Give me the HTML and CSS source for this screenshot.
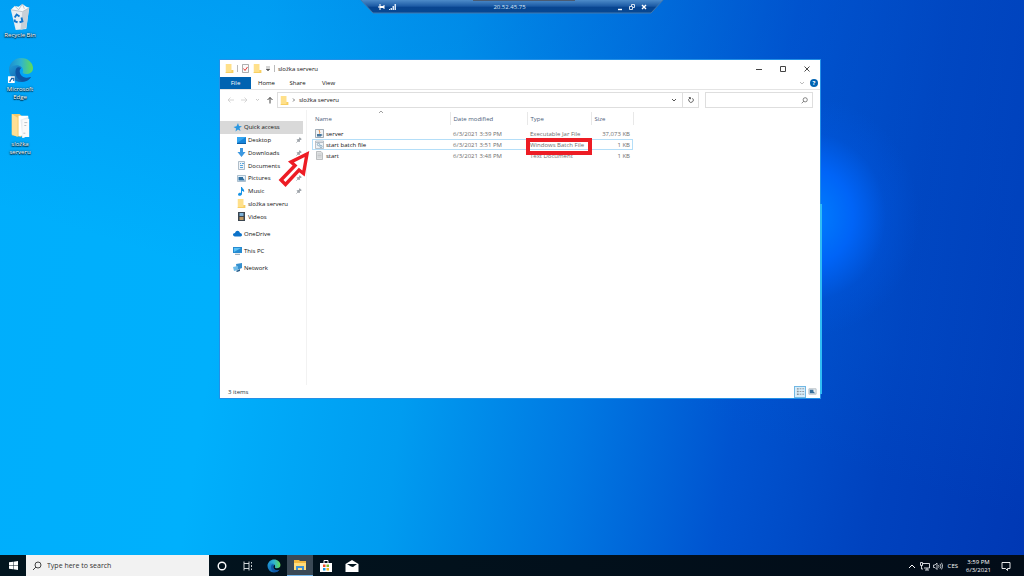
FILE: index.html
```html
<!DOCTYPE html>
<html lang="en">
<head>
<meta charset="utf-8">
<title>Desktop</title>
<link rel="stylesheet" href="styles.css">
</head>
<body>
<svg class="defs" aria-hidden="true">
  <defs>
    <linearGradient id="edgeBlue" x1="0" y1="0" x2="1" y2="1"><stop offset="0" stop-color="#1f9bd7"/><stop offset="1" stop-color="#0c4fa0"/></linearGradient>
    <linearGradient id="edgeGreen" x1="0" y1="0" x2="1" y2="0"><stop offset="0" stop-color="#1c8fd0"/><stop offset=".5" stop-color="#2fb4cf"/><stop offset="1" stop-color="#62dc55"/></linearGradient>
    <symbol id="edge" viewBox="0 0 26 26">
      <path fill="url(#edgeBlue)" d="M1 12C1 19 6 25 13 25c5 0 8-2 10-5-4 2-9 1-11-3-1-3 0-5 2-7-4-4-12-3-13 2z"/>
      <path fill="#0d56a5" d="M8 12c-2 6 2 12 8 12 3 0 6-2 7-4-5 2-10 0-11-4-1-2 0-4 1-5-2-1-4-1-5 1z"/>
      <path fill="url(#edgeGreen)" d="M1 12C2 5 7 1 13 1c7 0 12 5 12 10 0 4-3 6-7 6-3 0-4-1-3-3 1-5-8-9-14-2z"/>
    </symbol>
    <symbol id="folder" viewBox="0 0 8 9"><path fill="#ffe08a" d="M0 0h6v6h2v3H0z"/><path fill="#f8cf62" d="M6 6h2v3H0V8h6z"/></symbol>
    <symbol id="pin" viewBox="0 0 6 6"><path d="M3.500 .3 5.700 2.500M4 1 2.200 2.800 1 2.700l2.300 2.300-.1-1.200L5 2M2.100 3.900.4 5.600" fill="#a4a9ae" stroke="#8b9299" stroke-width=".7"/></symbol>
    <symbol id="search" viewBox="0 0 10 10"><circle cx="6" cy="4" r="3" fill="none" stroke="currentColor"/><path d="M4 6 1 9" stroke="currentColor" fill="none"/></symbol>
  </defs>
</svg>

<main class="desktop">
  <nav class="shortcuts" aria-label="Desktop icons">
    <a class="shortcut shortcut-bin" href="#bin">
      <svg class="shortcut-icon" viewBox="0 0 28 28"><path fill="#e9eef2" d="m4 7 19-2-3 22-11 1z"/><path fill="#c8d0d7" d="m16 7 7-2-3 21-6 2z"/><path fill="#f8fafb" d="m4 7 4-4 4 1 4-3 4 3 3 1-7 4z"/><path stroke="#aeb8c0" fill="none" stroke-width=".8" d="m4 7 12 2 7-4M8 3l4 4 4-6 2 5"/><path fill="none" stroke="#1476cc" stroke-width="2" d="m8 15 2-3 3 2M15 15l1 4-3 1M11 20l-3-1v-2"/></svg>
      <span>Recycle Bin</span>
    </a>
    <a class="shortcut" href="#edge-app">
      <svg class="shortcut-icon" viewBox="0 0 28 28"><use href="#edge" x="1" y="0" width="27" height="27"/><path fill="#fff" d="M1 20h7v7H1z"/><path fill="none" stroke="#1664ad" stroke-width="1.200" d="M3 26c0-2 1-3 3-4M4 22h3v3"/></svg>
      <span>Microsoft Edge</span>
    </a>
    <a class="shortcut" href="#folder">
      <svg class="shortcut-icon" viewBox="0 0 28 28"><path fill="#f4ca69" d="M5 2h8l2 2v22l-10-2z"/><path fill="#fff" d="M12 4h10v20l-10 1z"/><path fill="#e8edf0" d="m14 8 8-3v20l-6 2z"/><path fill="#fafafa" d="m16 8 7-1v19h-4l-3 1z"/><path fill="#ffdf94" d="m5 2 6 4v20l-6-3z"/><path stroke="#b7bec4" fill="none" d="M18 11h3M18 14h2M17 22h2"/></svg>
      <span>složka serveru</span>
    </a>
  </nav>

  <header class="remote">
    <svg class="remote-shape" viewBox="0 0 306 14" preserveAspectRatio="none" aria-hidden="true">
      <defs><linearGradient id="rb" x1="0" y1="0" x2="0" y2="1"><stop offset="0" stop-color="#5593cf"/><stop offset=".5" stop-color="#1d5ca6"/><stop offset=".6" stop-color="#084590"/><stop offset="1" stop-color="#064791"/></linearGradient></defs>
      <path fill="url(#rb)" stroke="#4479ac" d="M1 -1 14 13H292L305 -1z"/><path fill="#4a5b72" d="M114 0h102v1H114z"/>
    </svg>
    <div class="remote-content">
      <button class="remote-button" aria-label="Pin"><svg viewBox="0 0 8 8"><path d="M3 1v6M3 4h4M7 2v4M1 4h2M3 3.500h4M3 4.500h4" stroke="#fff"/></svg></button>
      <svg class="signal" viewBox="0 0 8 8"><path fill="#dceaf8" d="M0 6h1v1H0zM1.500 5H3v2H1.500zM3.500 3H5v4H3.500zM5.500 1H7v6H5.500z"/></svg>
      <span class="remote-name">20.52.45.75</span>
      <button class="remote-button" aria-label="Minimize session"><svg viewBox="0 0 8 8"><path d="M2 6.500h4" stroke="#fff" stroke-width="1.400"/></svg></button>
      <button class="remote-button" aria-label="Restore session"><svg viewBox="0 0 8 8"><path d="M3.500 3V1.500h3v3H5M1.500 3.500h3v3h-3z" fill="none" stroke="#e4effa" stroke-width=".9"/></svg></button>
      <button class="remote-button" aria-label="Close session"><svg viewBox="0 0 8 8"><path d="m2 2 4 4m0-4L2 6" stroke="#fff" stroke-width="1.400"/></svg></button>
    </div>
  </header>

  <section class="window" aria-label="složka serveru">
    <header class="titlebar">
      <svg class="icon" viewBox="0 0 8 9"><use href="#folder"/></svg>
      <i class="bar"></i>
      <svg class="icon" viewBox="0 0 8 9"><path fill="#fafafa" stroke="#8c8c8c" stroke-width=".7" d="M1 .5h6v8H1z"/><path d="m2 4.500 1.500 2L6 3" stroke="#e33b37" fill="none"/></svg>
      <svg class="icon" viewBox="0 0 8 9"><use href="#folder"/></svg>
      <svg class="caret" viewBox="0 0 6 6"><path d="M1 1h4M1 3h4L3 5z" fill="#555" stroke="#555" stroke-width=".5"/></svg>
      <i class="bar"></i>
      <h1 class="title">složka serveru</h1>
      <button class="caption" aria-label="Minimize"><svg viewBox="0 0 8 8"><path d="M1 4.500h6" stroke="#444"/></svg></button>
      <button class="caption" aria-label="Maximize"><svg viewBox="0 0 8 8"><path d="M1.500 1.500h5v5h-5z" fill="none" stroke="#444"/></svg></button>
      <button class="caption" aria-label="Close"><svg viewBox="0 0 8 8"><path d="m1.500 1.500 5 5m0-5-5 5" stroke="#333" stroke-width=".9"/></svg></button>
    </header>
    <div class="tabs">
      <button class="tab tab-file">File</button><button class="tab">Home</button><button class="tab">Share</button><button class="tab">View</button>
      <span class="grow"></span>
      <button class="plain" aria-label="Expand ribbon"><svg viewBox="0 0 8 8"><path d="m2 3 2 2 2-2" fill="none" stroke="#aaa" stroke-width=".8"/></svg></button>
      <button class="help" aria-label="Help">?</button>
    </div>
    <div class="address-row">
      <div class="history">
        <button class="plain" aria-label="Back"><svg viewBox="0 0 8 8"><path d="M7 4H1m2.500-2.500L1 4l2.500 2.500" fill="none" stroke="#ccc" stroke-width=".8"/></svg></button>
        <button class="plain" aria-label="Forward"><svg viewBox="0 0 8 8"><path d="M1 4h6M4.500 1.500 7 4 4.500 6.500" fill="none" stroke="#ccc" stroke-width=".8"/></svg></button>
        <button class="plain" aria-label="Recent"><svg viewBox="0 0 8 8"><path d="m3 3 1.500 1.500L6 3" fill="none" stroke="#bbb" stroke-width=".8"/></svg></button>
        <button class="plain" aria-label="Up"><svg viewBox="0 0 8 8"><path d="M4 7.500V1.500M1.500 4 4 1.500 6.500 4" fill="none" stroke="#444"/></svg></button>
      </div>
      <div class="address">
        <svg class="icon" viewBox="0 0 8 9"><use href="#folder"/></svg>
        <svg class="caret" viewBox="0 0 6 6"><path d="m2 1.500 1.500 1.500L2 4.500" fill="none" stroke="#555" stroke-width=".8"/></svg>
        <span class="path">složka serveru</span>
        <button class="plain" aria-label="Previous locations"><svg viewBox="0 0 8 8"><path d="m2 3 2 2 2-2" fill="none" stroke="#555"/></svg></button>
        <button class="plain refresh" aria-label="Refresh"><svg viewBox="0 0 8 8"><path d="M5.500 2.300A2.300 2.300 0 1 1 3 2M1.800 1.500H3.500V3.200" fill="none" stroke="#555" stroke-width=".9"/></svg></button>
      </div>
      <div class="find"><input class="find-input" type="text" aria-label="Search folder"><svg class="find-icon" viewBox="0 0 10 10"><use href="#search"/></svg></div>
    </div>

    <div class="content">
      <nav class="sidebar" aria-label="Locations">
        <div class="quick">
          <a class="place place-active" href="#quick"><svg class="icon" viewBox="0 0 9 9"><path fill="#2a97e0" d="m5 0 1 3 3 .2-2.500 1.800L7.500 8 5 6.500 2.500 8.500l.6-3L.5 4l3-.7z"/></svg>Quick access</a>
          <a class="place place-child" href="#desktop"><svg class="icon" viewBox="0 0 9 9"><path fill="#1583d8" d="M0 1h9v7H0z"/><path fill="#35a6f0" d="M0 1h9L0 7z"/><path fill="#0b5fa8" d="M0 7h9v1H0z"/></svg><span class="place-name">Desktop</span><svg class="pin" viewBox="0 0 6 6"><use href="#pin"/></svg></a>
          <a class="place place-child" href="#downloads"><svg class="icon" viewBox="0 0 9 9"><path fill="#3d98e0" d="M3 0h3v4h2.500L4.500 9 .5 4H3z"/></svg><span class="place-name">Downloads</span><svg class="pin" viewBox="0 0 6 6"><use href="#pin"/></svg></a>
          <a class="place place-child" href="#documents"><svg class="icon" viewBox="0 0 9 9"><path fill="#eef3f7" stroke="#8fa3b3" stroke-width=".7" d="M1.500.5h6v8h-6z"/><path stroke="#4a9cd8" d="M3 2.500h1M5 2.500h2M3 4.500h3M3 6.500h3" stroke-width=".9"/></svg><span class="place-name">Documents</span><svg class="pin" viewBox="0 0 6 6"><use href="#pin"/></svg></a>
          <a class="place place-child" href="#pictures"><svg class="icon" viewBox="0 0 9 9"><path fill="#e8f2fa" stroke="#8da7ba" stroke-width=".7" d="M.5 1.500h8v6h-8z"/><path fill="#2e6e9f" d="M1.500 3H6v1l2 2.500H1.500z"/></svg><span class="place-name">Pictures</span><svg class="pin" viewBox="0 0 6 6"><use href="#pin"/></svg></a>
          <a class="place place-child" href="#music"><svg class="icon" viewBox="0 0 9 9"><path fill="#1793e5" d="M4 0h1c0 2 3 2 2 5-1-1-1-1-2-1v3C5 9 1 9.500 1 7.500 1 6 3 5.500 4 6z"/></svg><span class="place-name">Music</span><svg class="pin" viewBox="0 0 6 6"><use href="#pin"/></svg></a>
          <a class="place place-child" href="#slozka"><svg class="icon" viewBox="0 0 8 9"><use href="#folder"/></svg><span class="place-name">složka serveru</span></a>
          <a class="place place-child" href="#videos"><svg class="icon" viewBox="0 0 9 9"><path fill="#3c4650" d="M1 0h7v9H1z"/><path fill="#7eb2d9" d="M2.500 1h4v3h-4z"/><path fill="#bf9a64" d="M2.500 5h4v3h-4z"/></svg><span class="place-name">Videos</span></a>
        </div>
        <a class="place place-root" href="#onedrive"><svg class="icon" viewBox="0 0 9 9"><path fill="#0c72c9" d="M2 7.500C-1 7-.3 4 2 4c1-3 4-3 5 0 2 0 3 3 .5 3.500z"/></svg>OneDrive</a>
        <a class="place place-root" href="#pc"><svg class="icon" viewBox="0 0 9 9"><path fill="#268bd1" d="M0 1h9v6H0z"/><path fill="#5dc2f4" d="M1 2h7L1 6z"/><path stroke="#6f8799" d="M2 8.300h5" stroke-width=".8"/></svg>This PC</a>
        <a class="place place-root" href="#network"><svg class="icon" viewBox="0 0 9 9"><path fill="#3590cf" d="m3 1 6-1v5L4 7z"/><path fill="#6fbce9" d="m0 4 5-1v4L1 8z"/><path fill="#285f8c" d="m3 8 4-2v2L4 9z"/></svg>Network</a>
      </nav>
      <div class="files">
        <table class="list">
          <colgroup><col class="col-name"><col class="col-date"><col class="col-type"><col class="col-size"></colgroup>
          <thead><tr><th class="sorted">Name<svg class="sort" viewBox="0 0 6 4"><path d="m1 3 2-2 2 2" fill="none" stroke="#777" stroke-width=".7"/></svg></th><th>Date modified</th><th>Type</th><th>Size</th></tr></thead>
          <tbody>
            <tr><td><div class="file"><svg class="icon" viewBox="0 0 9 9"><path fill="#f0f2f4" stroke="#7d8c99" stroke-width=".7" d="M.5.5h8v8h-8z"/><path fill="#47779e" d="M2 5h4v2.500H2z"/><path stroke="#e37824" fill="none" d="M4.500 1c-1 1 1 2 0 3.500"/><path fill="none" stroke="#47779e" stroke-width=".7" d="M6 5.500h1v1H6"/></svg>server</div></td><td>6/3/2021 3:39 PM</td><td>Executable Jar File</td><td class="num">37,073 KB</td></tr>
            <tr class="focused"><td><div class="file"><svg class="icon" viewBox="0 0 9 9"><path fill="#eef2f5" stroke="#a1abb3" stroke-width=".7" d="M.5 1h8v7.500h-8z"/><path stroke="#a1abb3" stroke-width=".7" d="M1 2.500h7"/><circle cx="3.500" cy="4.500" r="1.200" fill="none" stroke="#7aa0b9" stroke-width=".8"/><circle cx="6" cy="6.500" r="1.100" fill="none" stroke="#7aa0b9" stroke-width=".8"/></svg>start batch file</div></td><td>6/3/2021 3:51 PM</td><td>Windows Batch File</td><td class="num">1 KB</td></tr>
            <tr><td><div class="file"><svg class="icon" viewBox="0 0 9 9"><path fill="#e1e3e4" stroke="#a5a9ac" stroke-width=".7" d="M1.500.5h4.500l1.500 1.500v6.500h-6z"/><path stroke="#b1b5b8" stroke-width=".6" d="M2.500 3h4M2.500 4.500h4M2.500 6h4"/></svg>start</div></td><td>6/3/2021 3:48 PM</td><td>Text Document</td><td class="num">1 KB</td></tr>
          </tbody>
        </table>
      </div>
    </div>
    <footer class="status"><span class="grow">3 items</span>
      <button class="view view-on" aria-label="Details"><svg viewBox="0 0 10 10"><path d="M1 2h2M1 5h2M1 8h2" stroke="#8a9298" stroke-width="1.500"/><path d="M4 2h2M7 2h2M4 5h2M7 5h2M4 8h2M7 8h2" stroke="#8a9298"/></svg></button>
      <button class="view" aria-label="Large icons"><svg viewBox="0 0 10 10"><path d="M1 2h8v6H1z" fill="#e9eef2" stroke="#b4bdc4"/><path fill="#356e9b" d="M2 3h4v2l2 2H2z"/></svg></button>
    </footer>
    <svg class="pointer" viewBox="0 0 36 40" aria-hidden="true"><path fill="#fff" stroke="#ed1c24" stroke-width="3.400" d="M31 5 15 13l4 3.500L5 31l4.500 4.500L23 21l4.500 3.500z"/></svg>
    <i class="marker"></i>
  </section>
</main>

<footer class="taskbar">
  <button class="task start" aria-label="Start"><svg viewBox="0 0 10 10"><path fill="#fff" d="m0 1.500 4.500-.7v4H0zM5 .7 10 0v4.800H5zM0 5.300h4.500v4L0 8.600zM5 5.300h5V10l-5-.7z"/></svg></button>
  <label class="search"><svg class="search-icon" viewBox="0 0 10 10"><use href="#search"/></svg><input class="search-input" type="text" placeholder="Type here to search" aria-label="Type here to search"></label>
  <button class="task" aria-label="Cortana"><svg viewBox="0 0 14 14"><circle cx="7" cy="7" r="3.800" fill="none" stroke="#fff" stroke-width="1.400"/></svg></button>
  <button class="task" aria-label="Task view"><svg viewBox="0 0 14 14"><path d="M3 2.500v2h5v-2M3 11.500v-2h5v2M3 4.500v5M8 4.500v5M10.500 3v1.500M10.500 6v2M10.500 9.500V11" fill="none" stroke="#e3e8ea" stroke-width=".9"/></svg></button>
  <button class="task" aria-label="Microsoft Edge"><svg viewBox="0 0 26 26"><use href="#edge"/></svg></button>
  <button class="task task-on" aria-label="File Explorer"><svg viewBox="0 0 14 14"><path fill="#f3b83f" d="M1 2h5l1 1h6v9H1z"/><path fill="#ffdc7b" d="M1 5h12v7H1z"/><path fill="#3e91d4" d="M3 8h8v4H9v-2H5v2H3z"/></svg></button>
  <button class="task" aria-label="Store"><svg viewBox="0 0 14 14"><path d="M5 4V1.500h4V4" fill="none" stroke="#fff"/><path fill="#fff" d="M1 4h12v9H1z"/><path fill="#ef4b27" d="M4 5.500h2.500V8H4z"/><path fill="#7aba2d" d="M7.500 5.500H10V8H7.500z"/><path fill="#159bdc" d="M4 9h2.500v2.500H4z"/><path fill="#f5b51b" d="M7.500 9H10v2.500H7.500z"/></svg></button>
  <button class="task" aria-label="Mail"><svg viewBox="0 0 14 14"><path fill="#fff" d="m.5 5 6.500-4 6.500 4v8H.5z"/><path fill="#02151f" d="M2 5h10L8 8 6 7.500z"/></svg></button>
  <span class="grow"></span>
  <div class="tray">
    <button class="tray-button" aria-label="Hidden icons"><svg viewBox="0 0 10 10"><path d="m2 7 3-3 3 3" fill="none" stroke="#fff"/></svg></button>
    <button class="tray-button" aria-label="Network"><svg viewBox="0 0 10 10"><path d="M3 2.500h6.500v4.500H4M5 9h4M7 7v2M.5 1.500h2v3h-2zM1.500 4.500V8H3" fill="none" stroke="#e6eaef" stroke-width=".9"/></svg></button>
    <button class="tray-button" aria-label="Volume"><svg viewBox="0 0 10 10"><path d="M.5 4v2.500H2L4 8.500V2L2 4zM5.500 4q1 1.300 0 2.600M7 2.800q2 2.400 0 4.800M8.500 1.800q2.500 3.300 0 6.600" fill="none" stroke="#e6eaef" stroke-width=".8"/></svg></button>
  </div>
  <span class="language">CES</span>
  <time class="clock" datetime="2021-06-03T15:59">3:59 PM<br>6/3/2021</time>
  <button class="notice" aria-label="Notifications"><svg viewBox="0 0 10 10"><path d="M1 1.500h8v6H6.500v2l-2-2H1z" fill="none" stroke="#fff" stroke-width=".9"/></svg></button>
</footer>
</body>
</html>
```
FILE: styles.css
```css
* { box-sizing: border-box; }
body {
  margin: 0;
  height: 100vh;
  display: flex;
  flex-direction: column;
  overflow: hidden;
  font: 6px/8px "Open Sans", "Noto Sans", sans-serif;
  color: #111;
}
button { border: 0; padding: 0; background: none; font: inherit; color: inherit; display: flex; align-items: center; justify-content: center; }
a { color: inherit; text-decoration: none; }
svg { display: block; flex: none; }
input { border: 0; padding: 0; min-width: 0; background: none; font: inherit; }
.defs { position: absolute; width: 0; height: 0; }
.grow { flex: 1; }

.desktop {
  position: relative;
  flex: 1;
  min-height: 0;
  background:
    radial-gradient(ellipse 110px 120px at 79% 39%, #0080ff 0%, rgba(0, 104, 255, .85) 40%, rgba(0, 90, 230, .3) 70%, rgba(0, 80, 220, 0) 100%),
    linear-gradient(197deg, rgba(0, 80, 200, .35) 0%, rgba(0, 100, 220, .12) 45%, rgba(0, 120, 230, 0) 60%),
    linear-gradient(99deg, #00aefc 0%, #00b0fc 24%, #009cf0 42%, #0078e2 58%, #0054d0 72%, #0042be 86%, #0038b4 100%);
}

.shortcuts { display: flex; flex-direction: column; align-items: flex-start; gap: 11px; padding-top: 3px; }
.shortcut { width: 40px; display: flex; flex-direction: column; align-items: center; gap: 1px; color: #fff; text-align: center; text-shadow: 0 1px 1px #000, 0 0 2px #000; }
.shortcut-bin { height: 43px; }
.shortcut-icon { width: 27px; height: 27px; }
.shortcut span { max-width: 36px; }

.remote { position: absolute; top: 0; left: 50%; width: 306px; height: 14px; margin-left: -153px; color: #d5e5f5; }
.remote-shape { position: absolute; width: 100%; height: 100%; }
.remote-content { position: relative; display: flex; align-items: center; height: 13px; padding: 0 17px 0 18px; gap: 4px; }
.remote-name { flex: 1; padding-left: 6px; text-align: center; }
.remote-button, .remote-button svg, .signal { width: 8px; height: 8px; }

.window { position: absolute; inset: 60px 204px 157px 220px; display: flex; flex-direction: column; background: #fff; box-shadow: 0 0 0 1px #2490e6; }
.window::after { content: ""; position: absolute; top: 144px; right: -2px; bottom: 4px; width: 2px; background: #30bdf5; }
.icon { width: 9px; height: 9px; }
.caret { width: 6px; height: 6px; }
.titlebar { display: flex; align-items: center; height: 17px; padding: 0 3px 0 5px; gap: 3px; }
.bar { width: 1px; height: 7px; background: #bbb; }
.title { flex: 1; margin: 0; font-size: 6px; font-weight: 400; }
.caption { width: 21px; height: 16px; }
.caption svg, .plain svg { width: 8px; height: 8px; }
.tabs { display: flex; align-items: stretch; height: 13px; border-bottom: 1px solid #e4e4e4; }
.tab { width: 31px; }
.tab-file { background: #0063b1; color: #fff; }
.plain { min-width: 12px; }
.help { align-self: center; width: 8px; height: 8px; margin: 0 2px; border-radius: 50%; background: #0063b1; color: #fff; font-weight: 700; }

.address-row { display: flex; align-items: stretch; height: 20px; padding: 2px 7px 2px 5px; }
.history { display: flex; width: 52px; justify-content: space-between; padding-right: 1px; }
.address { flex: 1; display: flex; align-items: center; border: 1px solid #dedede; padding-left: 2px; gap: 2px; }
.path { flex: 1; }
.refresh { align-self: stretch; width: 16px; border-left: 1px solid #dedede; }
.find { width: 108px; display: flex; align-items: center; margin-left: 6px; padding: 0 4px; border: 1px solid #dedede; }
.find-input { flex: 1; }
.find-icon { width: 7px; height: 7px; color: #555; }

.content { flex: 1; display: flex; min-height: 0; }
.sidebar { width: 87px; padding: 11px 3px 0 0; border-right: 1px solid #f2f2f2; }
.quick { display: grid; grid-auto-rows: 1fr; height: 102px; margin-bottom: 2px; }
.place { display: flex; align-items: center; gap: 2px; padding-left: 13px; }
.place-child { padding: 0 1px 0 17px; }
.place-active { background: #d9d9d9; }
.place-name { flex: 1; }
.place-root { height: 17px; }
.pin { width: 6px; height: 6px; }

.files { flex: 1; padding: 2px 0 0 5px; }
.list { width: 321px; table-layout: fixed; border-collapse: collapse; color: #6d6d6d; }
.col-name { width: 138px; }
.col-date { width: 77px; }
.col-type { width: 64px; }
.col-size { width: 42px; }
.list th { height: 13px; padding: 0 3px; border-right: 1px solid #e8e8e8; text-align: left; font-weight: 400; color: #4c607a; }
.sorted { position: relative; }
.sort { position: absolute; top: -2px; left: 50%; width: 6px; height: 4px; margin-left: -3px; }
.list thead::after { content: ""; display: block; height: 3px; }
.list td { height: 11px; padding: 0 3px; white-space: nowrap; }
.list td.num { text-align: right; }
.focused { outline: 1px solid #b4def8; outline-offset: -1px; }
.file { display: flex; align-items: center; gap: 2px; color: #111; }

.status { display: flex; align-items: center; height: 13px; padding: 0 2px 0 8px; color: #234; }
.view { width: 12px; height: 12px; }
.view svg { width: 9px; height: 9px; }
.view-on { background: #d7edfa; border: 1px solid #72b8e4; }

.pointer { position: absolute; left: 56px; top: 89px; width: 36px; height: 40px; }
.marker { position: absolute; left: 306px; top: 78px; width: 66px; height: 17px; border: 4px solid #ed1c24; }

.taskbar { display: flex; align-items: stretch; height: 21px; background: linear-gradient(90deg, #02151f, #020c18); color: #fff; }
.task { width: 26px; }
.task svg { width: 14px; height: 14px; }
.start svg { width: 9px; height: 9px; }
.task-on { background: #3a4956; border-bottom: 1px solid #76b9ed; }
.search { width: 183px; display: flex; align-items: center; gap: 5px; padding-left: 6px; background: #f2f2f2; color: #444; }
.search-icon { width: 10px; height: 10px; }
.search-input { flex: 1; font-size: 7px; }
.search-input::placeholder { color: #333; opacity: 1; }
.tray { display: flex; gap: 3px; }
.tray-button svg, .notice svg { width: 10px; height: 10px; }
.language { align-self: center; margin-left: 5px; }
.clock { align-self: center; margin-left: 8px; text-align: center; }
.notice { margin: 0 13px 0 10px; }
```
